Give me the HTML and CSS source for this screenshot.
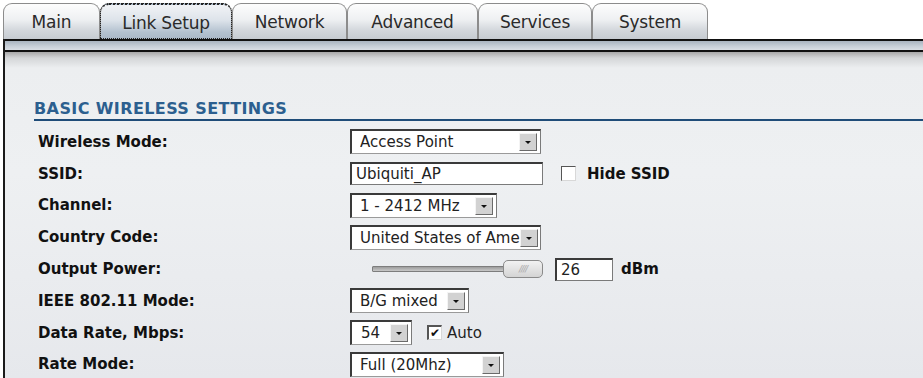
FILE: index.html
```html
<!DOCTYPE html>
<html>
<head>
<meta charset="utf-8">
<link rel="stylesheet" href="styles.css">
</head>
<body>
<nav class="tabs">
  <div class="tab t-main">Main</div>
  <div class="tab t-link active">Link Setup</div>
  <div class="tab t-net">Network</div>
  <div class="tab t-adv">Advanced</div>
  <div class="tab t-srv">Services</div>
  <div class="tab t-sys">System</div>
</nav>
<div class="frame">
  <div class="band"></div>
  <div class="panel">
    <h2 class="heading">BASIC WIRELESS SETTINGS</h2>
    <div class="form">
      <div class="row">
        <label class="lbl">Wireless Mode:</label>
        <div class="ctl"><div class="select w-mode"><span class="val">Access Point</span><span class="btn"></span></div></div>
      </div>
      <div class="row">
        <label class="lbl">SSID:</label>
        <div class="ctl">
          <div class="input w-ssid">Ubiquiti_AP</div>
          <span class="check"></span><span class="blbl">Hide SSID</span>
        </div>
      </div>
      <div class="row">
        <label class="lbl">Channel:</label>
        <div class="ctl"><div class="select w-chan"><span class="val">1 - 2412 MHz</span><span class="btn"></span></div></div>
      </div>
      <div class="row">
        <label class="lbl">Country Code:</label>
        <div class="ctl"><div class="select w-country"><span class="val">United States of America</span><span class="btn"></span></div></div>
      </div>
      <div class="row">
        <label class="lbl">Output Power:</label>
        <div class="ctl">
          <div class="slider"><div class="track"></div><div class="thumb"><span>////</span></div></div>
          <div class="input w-pow">26</div>
          <span class="blbl dbm">dBm</span>
        </div>
      </div>
      <div class="row">
        <label class="lbl">IEEE 802.11 Mode:</label>
        <div class="ctl"><div class="select w-ieee"><span class="val">B/G mixed</span><span class="btn"></span></div></div>
      </div>
      <div class="row">
        <label class="lbl">Data Rate, Mbps:</label>
        <div class="ctl">
          <div class="select w-rate"><span class="val">54</span><span class="btn"></span></div>
          <span class="check checked">&#10004;</span><span class="plbl">Auto</span>
        </div>
      </div>
      <div class="row">
        <label class="lbl">Rate Mode:</label>
        <div class="ctl"><div class="select w-rmode"><span class="val">Full (20Mhz)</span><span class="btn"></span></div></div>
      </div>
    </div>
  </div>
</div>
</body>
</html>
```

FILE: styles.css
```css
* { box-sizing: border-box; }
html, body { margin: 0; padding: 0; }
body {
  background: #ffffff;
  width: 923px;
  height: 378px;
  overflow: hidden;
  font-family: "DejaVu Sans", Verdana, sans-serif;
}

.tabs {
  display: flex;
  align-items: flex-end;
  height: 39px;
  padding-left: 3px;
  padding-top: 3px;
}
.tab {
  height: 36px;
  display: flex;
  align-items: center;
  justify-content: center;
  font-size: 17px;
  color: #2a2a2a;
  border: 1px solid #8c8c8c;
  border-bottom: none;
  border-radius: 9px 9px 0 0;
  background: linear-gradient(#fdfdfd 0%, #eef0f2 45%, #d3d7dc 75%, #c6cbd1 100%);
  padding-top: 1px;
  letter-spacing: -0.2px;
}
.tab.active {
  background: linear-gradient(#f1f3f6 0%, #dde3ea 45%, #b3c1cf 80%, #a9b8c7 100%);
  outline: 1px dotted #222;
  outline-offset: -1px;
  border-top: 2px dotted #222;
}
.t-main { width: 97px; }
.t-link { width: 132px; }
.t-net { width: 115px; }
.t-adv { width: 131px; }
.t-srv { width: 114px; }
.t-sys { width: 116px; }

.frame {
  margin-left: 3px;
  border-left: 2px solid #1a1a1a;
  height: 339px;
}
.band {
  height: 13px;
  border-top: 2px solid #111;
  border-bottom: 2px solid #111;
  background: linear-gradient(#a9b4c0, #c8d0d8 60%, #d9dee4);
}
.panel {
  height: 326px;
  background: linear-gradient(#a9a9a9 0px, #d4d6d8 6px, #eceef0 16px, #eef0f2 120px, #e6e8ec 326px);
  padding-top: 48px;
  padding-left: 29px;
}
.heading {
  margin: 0;
  font-size: 16px;
  font-weight: bold;
  color: #2c5f8f;
  letter-spacing: 0.4px;
  line-height: 18px;
  padding-bottom: 1px;
  border-bottom: 2px solid #1f4c78;
}
.form {
  display: flex;
  flex-direction: column;
  padding-top: 5px;
}
.row {
  height: 31.8px;
  display: flex;
  align-items: center;
}
.lbl {
  width: 316px;
  padding-left: 4px;
  font-size: 15px;
  font-weight: bold;
  color: #111;
}
.ctl {
  display: flex;
  align-items: center;
}

.select {
  height: 25px;
  display: flex;
  align-items: center;
  justify-content: space-between;
  background: #fff;
  border: 2px solid #3a3a3a;
  border-right: 1px solid #7a7a7a;
  border-bottom: 1px solid #9a9a9a;
  padding-left: 8px;
  padding-right: 3px;
  font-size: 15px;
  color: #222;
  overflow: hidden;
  white-space: nowrap;
}
.select .val { overflow: hidden; flex: 1; }
.btn {
  width: 18px;
  height: 18px;
  flex: none;
  background: #d2d2d2;
  border: 1px solid;
  border-color: #f4f4f4 #6a6a6a #6a6a6a #f4f4f4;
  position: relative;
}
.btn::after {
  content: "";
  position: absolute;
  left: 5px;
  top: 7px;
  border-left: 3px solid transparent;
  border-right: 3px solid transparent;
  border-top: 3px solid #111;
}
.w-mode { width: 191px; }
.w-chan { width: 147px; }
.w-country { width: 191px; padding-right: 2px; }
.w-ieee { width: 119px; }
.w-rate { width: 62px; padding-left: 9px; }
.w-rmode { width: 154px; }

.input {
  height: 23px;
  background: #fff;
  border: 1px solid #7a7a7a;
  border-top: 2px solid #3a3a3a;
  border-left: 2px solid #3a3a3a;
  font-size: 15px;
  color: #222;
  padding-left: 4px;
  display: flex;
  align-items: center;
}
.w-ssid { width: 193px; }
.w-pow { width: 58px; margin-left: 12px; }

.check {
  width: 15px;
  height: 15px;
  margin-left: 18px;
  background: #fff;
  border: 1px solid;
  border-color: #555 #d8d8d8 #d8d8d8 #555;
  font-size: 12px;
  line-height: 13px;
  text-align: center;
  color: #111;
}
.check.checked { margin-left: 15px; border-left-width: 2px; border-top-width: 2px; }
.blbl {
  font-size: 15px;
  font-weight: bold;
  color: #111;
  margin-left: 11px;
}
.dbm { margin-left: 8px; }
.plbl {
  font-size: 15px;
  color: #222;
  margin-left: 5px;
}

.slider {
  width: 193px;
  height: 20px;
  position: relative;
  display: flex;
  align-items: center;
}
.track {
  margin-left: 22px;
  width: 150px;
  height: 6px;
  border: 1px solid #7d7d7d;
  background: linear-gradient(#9c9c9c, #c8c8c8);
  border-radius: 1px;
}
.thumb {
  position: absolute;
  left: 153px;
  top: 1px;
  width: 40px;
  height: 18px;
  border: 1px solid #8a8a8a;
  border-radius: 5px;
  background: linear-gradient(#f2f2f2, #d4d4d4);
  display: flex;
  align-items: center;
  justify-content: center;
  font-size: 9px;
  font-style: italic;
  color: #a8a8a8;
  letter-spacing: -1px;
}
```
